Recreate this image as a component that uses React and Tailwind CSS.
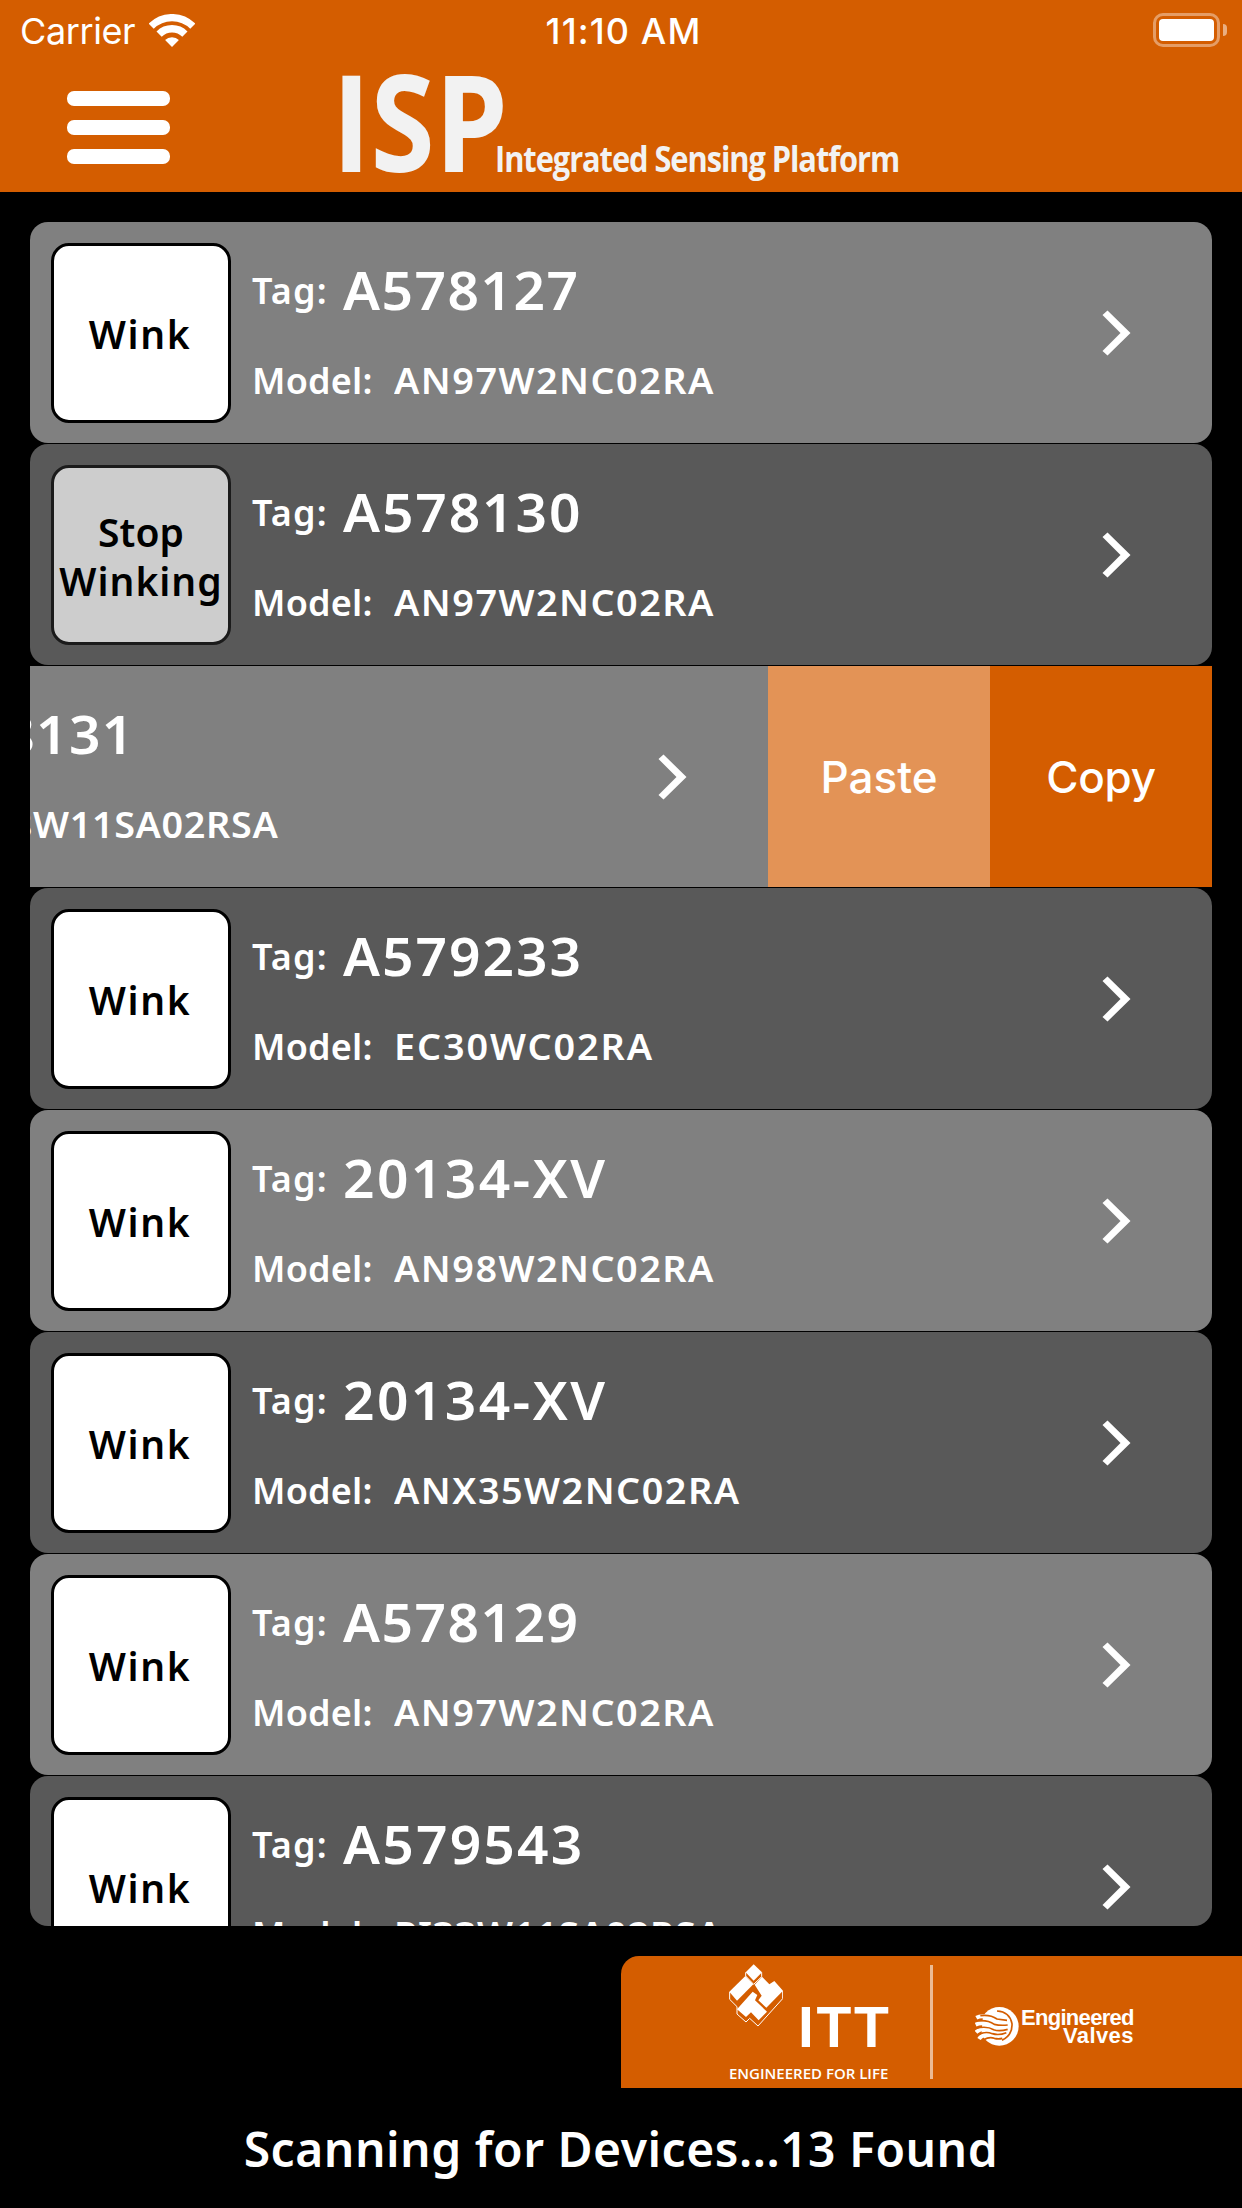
import React from 'react';

const devices = [
  { tag: 'A578127', model: 'AN97W2NC02RA' },
  { tag: 'A578130', model: 'AN97W2NC02RA', winking: true, tagTracking: 'tracking-[1.8px]' },
  { tag: 'A578131', model: 'PI38W11SA02RSA', swiped: true, tagTracking: 'tracking-[1.3px]', modelTracking: 'tracking-[0.6px]' },
  { tag: 'A579233', model: 'EC30WC02RA', tagTracking: 'tracking-[1.9px]', modelTracking: 'tracking-[1.8px]' },
  { tag: '20134-XV', model: 'AN98W2NC02RA', tagTracking: 'tracking-[2.3px]' },
  { tag: '20134-XV', model: 'ANX35W2NC02RA', tagTracking: 'tracking-[2.3px]' },
  { tag: 'A578129', model: 'AN97W2NC02RA' },
  { tag: 'A579543', model: 'PI33W11SA02RSA', tagTracking: 'tracking-[2.1px]', modelTracking: 'tracking-[0.6px]' },
];

const WifiIcon = () => (
  <svg width="46" height="33" viewBox="0 0 46 33" fill="none" stroke="white">
    <path d="M2.2 12.2a29.4 29.4 0 0 1 41.6 0" strokeWidth="7.2" />
    <path d="M10.1 20.1a18.3 18.3 0 0 1 25.8 0" strokeWidth="7.4" />
    <path d="M23 33l-6.9-6.9a9.8 9.8 0 0 1 13.8 0z" fill="white" stroke="none" />
  </svg>
);

const StatusBar = () => (
  <div className="grid grid-cols-3 items-center h-[60px] pl-5 pr-[15px] font-['Inter',sans-serif] text-[36px] leading-[40px]">
    <div className="flex items-center gap-[14px]">
      <span className="pt-[2px] font-normal tracking-[-0.4px]">Carrier</span>
      <WifiIcon />
    </div>
    <span className="pt-[2px] text-center font-medium tracking-[1.1px]">11:10 AM</span>
    <div className="flex items-center justify-end gap-[3px]">
      <div className="w-[67px] h-[34px] p-[3px] rounded-[10px] border-[3px] border-white/40">
        <div className="w-full h-full rounded-[4px] bg-white"></div>
      </div>
      <div className="w-1 h-3 rounded-r-full bg-white/50"></div>
    </div>
  </div>
);

const Header = () => (
  <header className="h-[192px] bg-[#d45d00]">
    <StatusBar />
    <div className="flex items-start pl-[67px]">
      <button className="flex flex-col gap-[14px] mt-[31px]" aria-label="Menu">
        <span className="w-[103px] h-[15px] rounded-[7px] bg-white"></span>
        <span className="w-[103px] h-[15px] rounded-[7px] bg-white"></span>
        <span className="w-[103px] h-[15px] rounded-[7px] bg-white"></span>
      </button>
      <div className="flex items-baseline mt-[12px] ml-[162px] font-['Open_Sans',sans-serif] font-bold text-[#f2f2f2] whitespace-nowrap">
        <div className="w-[163px]">
          <span className="inline-block origin-left scale-x-[0.87] text-[134px] leading-[96px]">ISP</span>
        </div>
        <span className="inline-block origin-left scale-x-[0.88] text-[35px] leading-[40px] tracking-[-1.2px]">
          Integrated Sensing Platform
        </span>
      </div>
    </div>
  </header>
);

const WinkButton = ({ winking }) => (
  <button
    className={`flex flex-col items-center justify-center w-[180px] h-[180px] mt-[21px] shrink-0 rounded-[18px] border-[3px] text-black text-[39px] leading-[49px] ${
      winking ? 'pt-[2px] bg-[#cdcdcd] border-[#1b1b1b]' : 'pt-px pr-[2px] bg-white border-black'
    }`}
  >
    {winking ? (
      <>
        <span>Stop</span>
        <span className="tracking-[1px]">Winking</span>
      </>
    ) : (
      <span className="tracking-[1.6px]">Wink</span>
    )}
  </button>
);

const Chevron = () => (
  <svg className="mt-[88px] mr-[81px] ml-auto shrink-0" width="29" height="46" viewBox="0 0 29 46" fill="white">
    <path d="M5.500 .5L28.500 23l-23 22.500L.5 41l18-18L.5 5z" />
  </svg>
);

const DeviceRow = ({ device, dark }) => (
  <div className={`flex h-[221px] shrink-0 overflow-hidden ${device.swiped ? '' : 'rounded-[18px]'}`}>
    <div
      className={`flex items-start w-[1182px] shrink-0 pl-[21px] ${dark ? 'bg-[#595959]' : 'bg-[#808080]'} ${
        device.swiped ? '-ml-[444px]' : ''
      }`}
    >
      <WinkButton winking={device.winking} />
      <div className="flex flex-col gap-[31px] pt-[38px] ml-[21px] text-[36px] leading-[60px] whitespace-nowrap">
        <div className="flex items-center h-[60px]">
          <span className="w-[91px] pt-[2px] tracking-[1.2px]">Tag:</span>
          <span className={`origin-left scale-x-[1.04] text-[53px] ${device.tagTracking || 'tracking-[1.4px]'}`}>
            {device.tag}
          </span>
        </div>
        <div className="flex items-center h-[60px]">
          <span className="w-[142px] tracking-[0.2px]">Model:</span>
          <span className={`origin-left scale-x-[1.05] ${device.modelTracking || 'tracking-[1.4px]'}`}>
            {device.model}
          </span>
        </div>
      </div>
      <Chevron />
    </div>
    {device.swiped && (
      <div className="flex shrink-0 font-['Inter',sans-serif] font-medium text-[44px]">
        <button className="w-[222px] bg-[#e39356]">Paste</button>
        <button className="w-[222px] bg-[#d45d00] tracking-[-0.3px]">Copy</button>
      </div>
    )}
  </div>
);

const IttMark = () => (
  <svg className="mt-[8px] shrink-0" width="54" height="63" viewBox="26 14 162 189" fill="white">
    <path d="M100 15l25 24-25 25-24-25z" />
    <path d="M27 97l48-47 24 25-49 49z" />
    <path d="M103 76l22-24 22 23 15-10 26 29-50 51-24-22 10-14z" />
    <path d="M50 150l47-53 14 10-7 16 36 34-25 26-23-24-15 14z" />
    <path d="M76 39v11l24 25 24-23V39M28 98v22l22 22v22l27 24 11-11 25 23 27-30 47-52V95" fill="none" stroke="white" strokeWidth="3" />
  </svg>
);

const ValveGlobe = () => (
  <svg className="mt-[50px] ml-[42px] shrink-0" width="44" height="41" viewBox="22 31 132 123" fill="none">
    <circle cx="95" cy="92" r="58" fill="white" />
    <path d="M22 62l24-4-6 76-18-4z" fill="#d45d00" />
    <path d="M26 66q14-8 36-2M24 87q18-8 40 0M25 110q14-14 40-10M34 130q8-12 32-18" stroke="white" strokeWidth="12" />
    <path d="M88 46q38 2 45 38 2 34-30 50" stroke="#d45d00" strokeWidth="5" />
    <path d="M38 60q30-4 50 10l30 4M26 76q34-4 54 10 16 4 40 2M24 98q34-8 54 4 16 6 42-1M26 122q22-18 48-8 20 6 42-3M48 132q18-10 32-4 12 3 24 0" stroke="#d45d00" strokeWidth="5" />
  </svg>
);

const BrandBar = () => (
  <div className="flex items-start w-[621px] h-[132px] mt-[30px] ml-auto pl-[108px] rounded-tl-[18px] bg-[#d45d00] whitespace-nowrap">
    <div className="w-[161px] shrink-0">
      <div className="flex items-start h-[107px]">
        <IttMark />
        <span className="mt-[51px] ml-[15px] font-['Liberation_Sans',sans-serif] font-bold text-[57px] leading-[40px] tracking-[2.7px]">
          ITT
        </span>
      </div>
      <div className="font-['Open_Sans',sans-serif] text-[15px] leading-[20px]">ENGINEERED FOR LIFE</div>
    </div>
    <div className="w-[3px] h-[114px] mt-[9px] ml-[40px] shrink-0 bg-[#ecbb94]"></div>
    <ValveGlobe />
    <div className="flex flex-col items-end mt-[53px] ml-[2px] font-['Liberation_Sans',sans-serif] font-bold text-[22px] leading-[18px]">
      <span className="tracking-[-0.7px]">Engineered</span>
      <span className="tracking-[0.4px]">Valves</span>
    </div>
  </div>
);

export default function App() {
  return (
    <div className="flex flex-col w-[1242px] h-[2208px] overflow-hidden bg-black text-white font-semibold font-['Noto_Sans',sans-serif]">
      <Header />
      <main className="flex flex-col gap-px h-[1704px] mt-[30px] mx-[30px] shrink-0 overflow-hidden rounded-b-[18px]">
        {devices.map((device, i) => (
          <DeviceRow key={i} device={device} dark={i % 2 === 1} />
        ))}
      </main>
      <BrandBar />
      <footer className="h-[120px] text-center text-[48px] leading-[122px] tracking-[0.5px]">
        Scanning for Devices...13 Found
      </footer>
    </div>
  );
}
